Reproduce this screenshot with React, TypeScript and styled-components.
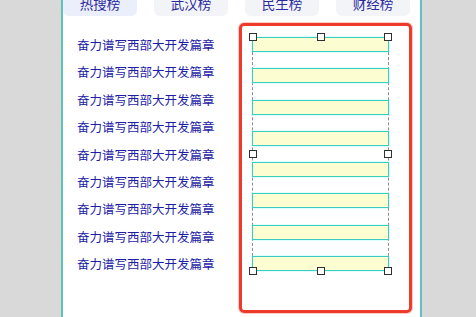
import React from "react";
import styled, { createGlobalStyle } from "styled-components";

const Global = createGlobalStyle`
  html, body { margin: 0; padding: 0; background: #d9d9d9; overflow: hidden; }
  body { font-family: "Noto Sans CJK SC", "Noto Sans", sans-serif; }
`;

const Page = styled.div`
  width: 476px;
  height: 317px;
  overflow: hidden;
  background: #d9d9d9;
`;

const Panel = styled.div`
  margin-left: 61px;
  width: 357px;
  height: 340px;
  background: #ffffff;
  border-left: 2px solid #5cc3be;
  border-right: 2px solid #5cc3be;
  display: flex;
  flex-direction: column;
`;

const Tabs = styled.div`
  display: flex;
  gap: 17px;
  margin-top: -8px;
`;

const Tab = styled.div<{ $active?: boolean }>`
  width: 74px;
  height: 24px;
  line-height: 22px;
  text-align: center;
  font-size: 13.5px;
  color: #2a2a9e;
  background: ${(p) => (p.$active ? "#ebeefb" : "#f3f4f8")};
  border-radius: 0 0 6px 6px;
`;

const Body = styled.div`
  display: flex;
  padding: 7px 8px 0 14px;
`;

const TitleList = styled.div`
  flex: 1;
  display: flex;
  flex-direction: column;
  padding-top: 8px;
`;

const Title = styled.div`
  height: 27.4px;
  line-height: 27.4px;
  font-size: 12.5px;
  color: #1d1da6;
  white-space: nowrap;
`;

const RedBox = styled.div`
  border: 3px solid #ee3a2b;
  border-radius: 5px;
  box-shadow: 0 0 0 1px rgba(255, 140, 130, 0.45);
  padding: 11px 20px 0 10px;
  box-sizing: content-box;
  width: 137px;
  height: 273px;
`;

const Selection = styled.div`
  position: relative;
  display: flex;
  flex-direction: column;
  gap: 16.3px;
  border-left: 1px dashed #8a8a8a;
  border-right: 1px dashed #8a8a8a;
`;

const Bar = styled.div`
  height: 15px;
  box-sizing: border-box;
  margin: 0 -1px;
  background: #fdfdd2;
  border: 1.5px solid #3ecbc3;
  box-shadow: 0 0 1.5px rgba(90, 255, 250, 0.8);
`;

const Handle = styled.div<{ $x: "l" | "m" | "r"; $y: "t" | "m" | "b" }>`
  position: absolute;
  width: 6px;
  height: 6px;
  background: #ffffff;
  border: 1px solid #2f2f2f;
  left: ${(p) => (p.$x === "l" ? "-4px" : p.$x === "m" ? "calc(50% - 4px)" : "auto")};
  right: ${(p) => (p.$x === "r" ? "-4px" : "auto")};
  top: ${(p) => (p.$y === "t" ? "-4px" : p.$y === "m" ? "calc(50% - 4px)" : "auto")};
  bottom: ${(p) => (p.$y === "b" ? "-4px" : "auto")};
`;

const tabs = ["热搜榜", "武汉榜", "民生榜", "财经榜"];
const titles = Array.from({ length: 9 }, () => "奋力谱写西部大开发篇章");
const bars = Array.from({ length: 8 }, (_, i) => i);

export default function App() {
  return (
    <Page>
      <Global />
      <Panel>
        <Tabs>
          {tabs.map((t, i) => (
            <Tab key={t} $active={i === 0}>
              {t}
            </Tab>
          ))}
        </Tabs>
        <Body>
          <TitleList>
            {titles.map((t, i) => (
              <Title key={i}>{t}</Title>
            ))}
          </TitleList>
          <RedBox>
            <Selection>
              {bars.map((b) => (
                <Bar key={b} />
              ))}
              <Handle $x="l" $y="t" />
              <Handle $x="m" $y="t" />
              <Handle $x="r" $y="t" />
              <Handle $x="l" $y="m" />
              <Handle $x="r" $y="m" />
              <Handle $x="l" $y="b" />
              <Handle $x="m" $y="b" />
              <Handle $x="r" $y="b" />
            </Selection>
          </RedBox>
        </Body>
      </Panel>
    </Page>
  );
}
